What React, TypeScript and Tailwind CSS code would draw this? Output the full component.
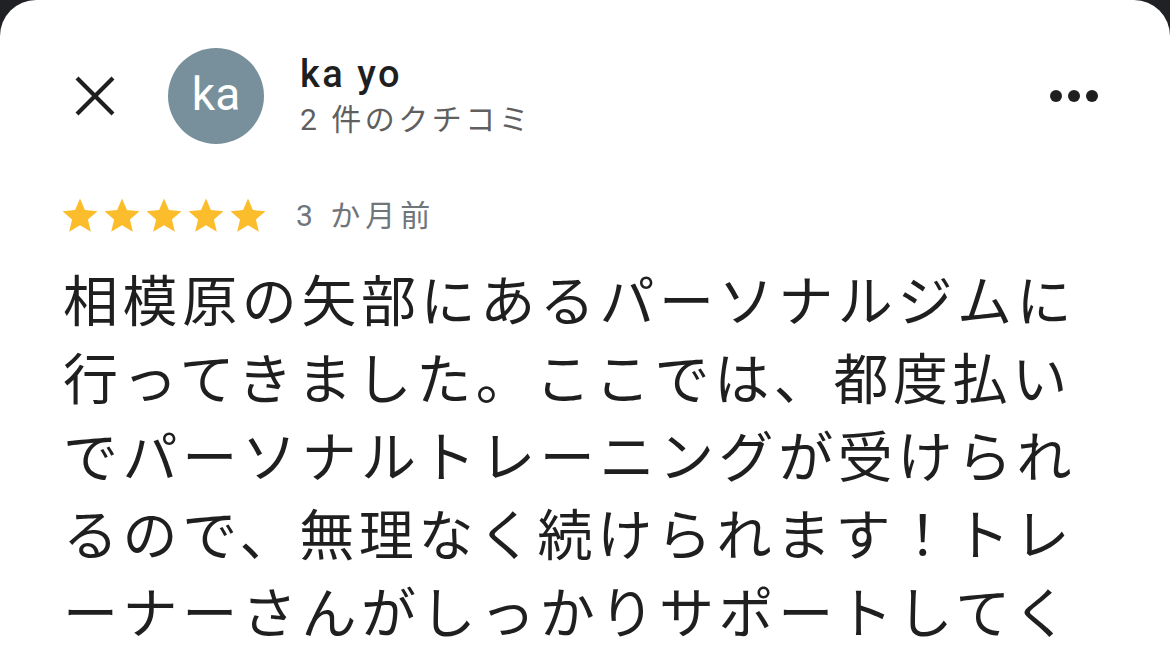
import React from "react";

const Star = () => (
  <svg width="42" height="42" viewBox="0 0 24 24" className="block shrink-0">
    <path
      fill="#fcbd2d"
      d="M12 17.27L18.18 21l-1.64-7.03L22 9.24l-7.19-.61L12 2 9.19 8.63 2 9.24l5.46 4.73L5.82 21z"
    />
  </svg>
);

const lines = [
  "相模原の矢部にあるパーソナルジムに",
  "行ってきました。ここでは、都度払い",
  "でパーソナルトレーニングが受けられ",
  "るので、無理なく続けられます！トレ",
  "ーナーさんがしっかりサポートしてく",
];

export default function App() {
  return (
    <div className="w-[1170px] h-[648px] bg-[#202124] overflow-hidden">
      <div className="w-full h-full bg-white rounded-t-[36px] overflow-hidden">
        {/* header */}
        <div className="flex items-center pt-[48px] pl-[75px] pr-[72px]">
          <svg width="40" height="40" viewBox="0 0 40 40" className="shrink-0">
            <path d="M2 2L38 38M38 2L2 38" stroke="#1f1f1f" strokeWidth="4.2" strokeLinecap="butt" />
          </svg>
          <div
            className="ml-[53px] w-[96px] h-[96px] rounded-full bg-[#78909c] flex items-center justify-center text-white text-[46px] shrink-0"
            style={{ fontFamily: "Roboto, 'Liberation Sans', sans-serif" }}
          >
            <span className="leading-none -mt-[4px]">ka</span>
          </div>
          <div className="ml-[36px] flex flex-col">
            <div
              className="text-[38px] leading-[40px] font-medium text-[#1f1f1f] tracking-[2.5px]"
              style={{ fontFamily: "Roboto, 'Liberation Sans', sans-serif" }}
            >
              ka yo
            </div>
            <div
              className="mt-[8px] text-[30px] leading-[36px] text-[#5f5f5f] tracking-[3.5px]"
              style={{ fontFamily: "Roboto, 'Noto Sans CJK JP', sans-serif" }}
            >
              2 件のクチコミ
            </div>
          </div>
          <div className="ml-auto flex items-center gap-[6px]">
            <div className="w-[12px] h-[12px] rounded-full bg-[#1f1f1f]" />
            <div className="w-[12px] h-[12px] rounded-full bg-[#1f1f1f]" />
            <div className="w-[12px] h-[12px] rounded-full bg-[#1f1f1f]" />
          </div>
        </div>

        {/* rating row */}
        <div className="flex items-center mt-[51px] pl-[59px]">
          <div className="flex">
            <Star />
            <Star />
            <Star />
            <Star />
            <Star />
          </div>
          <div
            className="ml-[27px] text-[30px] leading-[42px] text-[#70757a] tracking-[5px]"
            style={{ fontFamily: "Roboto, 'Noto Sans CJK JP', sans-serif" }}
          >
            3 か月前
          </div>
        </div>

        {/* body */}
        <p
          className="mt-[21px] pl-[63px] text-[55px] leading-[78px] text-[#1f1f1f] tracking-[4.6px] whitespace-nowrap"
          style={{ fontFamily: "'Noto Sans CJK JP', sans-serif" }}
        >
          {lines.map((l, i) => (
            <React.Fragment key={i}>
              {l}
              {i < lines.length - 1 && <br />}
            </React.Fragment>
          ))}
        </p>
      </div>
    </div>
  );
}
